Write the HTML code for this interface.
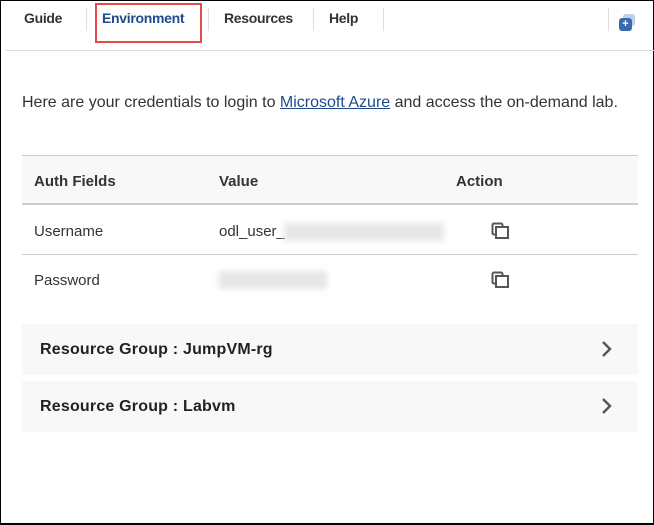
<html><head><style>
body{margin:0;width:654px;height:525px;position:relative;font-family:"Liberation Sans",sans-serif;background:#fff;overflow:hidden}
.b{position:absolute;left:0;top:0;width:652px;height:522px;border:1px solid #000;border-bottom-width:2px}
.a{position:absolute}
.tab{position:absolute;top:10px;font-size:14px;font-weight:bold;color:#333;letter-spacing:-0.3px}
.sep{position:absolute;top:8px;width:1px;height:23px;background:#ddd}
.t{font-size:15px;color:#333}
.h{font-size:15px;font-weight:bold;color:#333}
.blur{position:absolute;height:18px;background:#e6e6e6;filter:blur(3px)}
.rg{position:absolute;left:22px;width:616px;height:51px;background:#f8f8f8}
.rg span{position:absolute;left:18px;top:17px;font-size:16px;font-weight:bold;color:#222;letter-spacing:0.2px}
</style></head><body>
<div class="b"></div>
<div class="tab" style="left:24px">Guide</div>
<div class="sep" style="left:86px"></div>
<div class="tab" style="left:102px;color:#1f4b8c">Environment</div>
<div class="a" style="left:95px;top:3px;width:107px;height:40px;border:2px solid #e84a4a;box-sizing:border-box"></div>
<div class="sep" style="left:208px"></div>
<div class="tab" style="left:224px">Resources</div>
<div class="sep" style="left:313px"></div>
<div class="tab" style="left:329px">Help</div>
<div class="sep" style="left:383px"></div>
<div class="sep" style="left:608px"></div>
<div class="a" style="left:623px;top:14px;width:12px;height:12px;background:#bcd0e8;border-radius:3px"></div>
<div class="a" style="left:619px;top:18px;width:13px;height:13px;background:#3a6bb0;border-radius:3px;color:#fff;font-size:11px;line-height:13px;text-align:center;font-weight:bold">+</div>
<div class="a" style="left:6px;top:50px;width:648px;height:1px;background:#ddd"></div>
<div class="a t" style="left:22px;top:94px;font-size:16px">Here are your credentials to login to <span style="color:#1f4b8c;text-decoration:underline">Microsoft Azure</span> and access the on-demand lab.</div>
<div class="a" style="left:22px;top:155px;width:616px;height:50px;background:#f8f8f8;border-top:1px solid #ccc;border-bottom:2px solid #ccc;box-sizing:border-box"></div>
<div class="a h" style="left:34px;top:173px">Auth Fields</div>
<div class="a h" style="left:219px;top:173px">Value</div>
<div class="a h" style="left:456px;top:173px">Action</div>
<div class="a t" style="left:34px;top:223px">Username</div>
<div class="a t" style="left:219px;top:223px">odl_user_</div>
<div class="blur" style="left:284px;top:223px;width:160px"></div>
<div class="a" style="left:22px;top:254px;width:616px;height:1px;background:#ccc"></div>
<div class="a t" style="left:34px;top:272px">Password</div>
<div class="blur" style="left:219px;top:271px;width:108px"></div>
<svg class="a" style="left:491px;top:222px" width="20" height="18" viewBox="0 0 20 18"><rect x="1.5" y="1.5" width="10" height="11" rx="1.5" fill="none" stroke="#555" stroke-width="2"/><rect x="5" y="5" width="12" height="11" fill="#fff" stroke="#555" stroke-width="2"/></svg>
<svg class="a" style="left:491px;top:271px" width="20" height="18" viewBox="0 0 20 18"><rect x="1.5" y="1.5" width="10" height="11" rx="1.5" fill="none" stroke="#555" stroke-width="2"/><rect x="5" y="5" width="12" height="11" fill="#fff" stroke="#555" stroke-width="2"/></svg>
<div class="rg" style="top:324px"><span>Resource Group : JumpVM-rg</span><svg class="a" style="left:579px;top:16px" width="12" height="18"><path d="M2 2l7 7-7 7" fill="none" stroke="#555" stroke-width="2.4"/></svg></div>
<div class="rg" style="top:381px"><span>Resource Group : Labvm</span><svg class="a" style="left:579px;top:16px" width="12" height="18"><path d="M2 2l7 7-7 7" fill="none" stroke="#555" stroke-width="2.4"/></svg></div>
</body></html>
